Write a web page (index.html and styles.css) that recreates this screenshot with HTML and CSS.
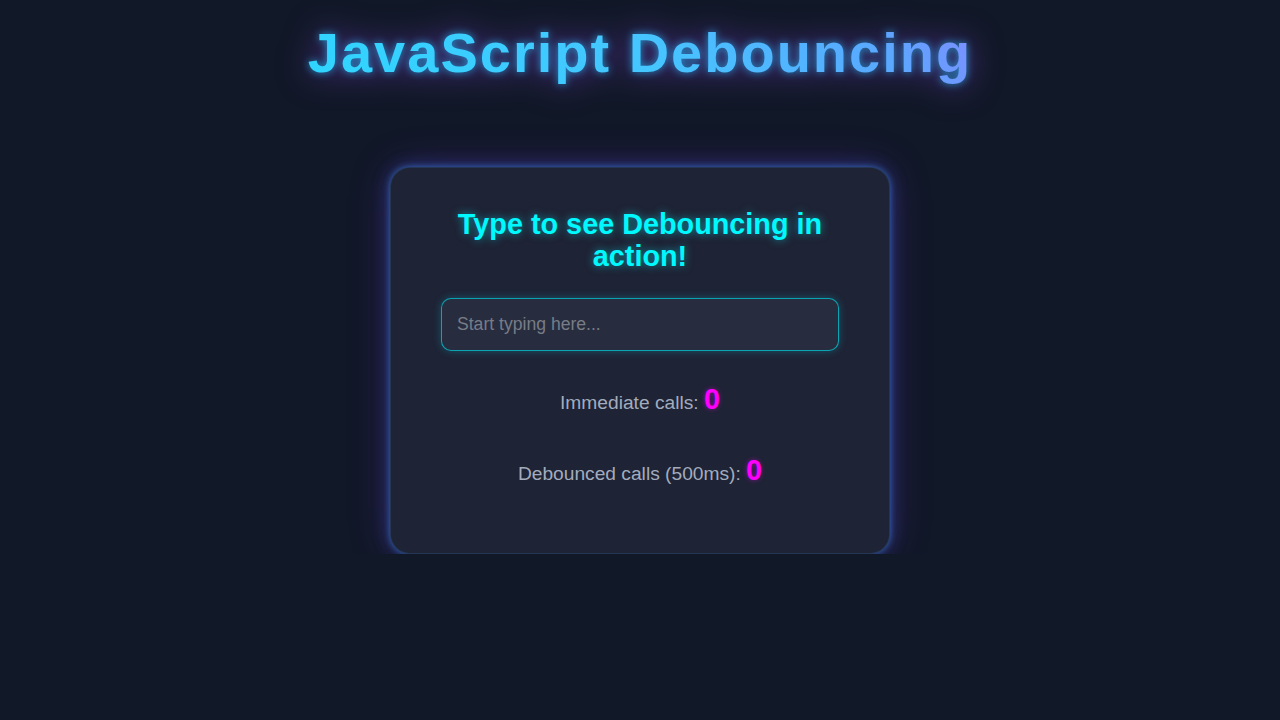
FILE: index.html
```html
<!DOCTYPE html>
<html lang="en">
<head>
<meta charset="UTF-8">
<title>JavaScript Debouncing</title>
<link rel="stylesheet" href="styles.css">
</head>
<body>
  <h1 class="title">JavaScript Debouncing</h1>
  <main class="card">
    <h2 class="card-title">Type to see Debouncing in action!</h2>
    <input class="search" type="text" placeholder="Start typing here...">
    <div class="stats">
      <p class="stat">Immediate calls: <span class="count">0</span></p>
      <p class="stat">Debounced calls (500ms): <span class="count">0</span></p>
    </div>
  </main>
</body>
</html>
```

FILE: styles.css
```css
* { box-sizing: border-box; }

html, body {
  margin: 0;
  padding: 0;
  background: #111827;
  min-height: 100%;
}

body {
  font-family: "Liberation Sans", Arial, sans-serif;
  padding-top: 20px;
  display: flex;
  flex-direction: column;
  align-items: center;
}

.title {
  margin: 0 0 82px;
  font-size: 56px;
  font-weight: 700;
  letter-spacing: 2px;
  line-height: normal;
  background: linear-gradient(60deg, #2fd6ff 0%, #45c6ff 50%, #5aa8ff 85%, #7f8cff 100%);
  -webkit-background-clip: text;
  background-clip: text;
  -webkit-text-fill-color: transparent;
  color: transparent;
  filter: drop-shadow(0 0 4px rgba(40, 190, 255, 0.75)) drop-shadow(0 0 16px rgba(140, 70, 240, 0.55));
}

.card {
  width: 500px;
  background: #1e2335;
  border: 1px solid rgba(60, 110, 180, 0.25);
  border-radius: 20px;
  padding: 40px 50px 66px;
  display: flex;
  flex-direction: column;
  align-items: center;
  box-shadow: 0 0 6px rgba(60, 150, 255, 0.55), 0 0 18px rgba(70, 110, 240, 0.35), 0 0 40px rgba(130, 50, 230, 0.28);
}

.card-title {
  margin: 0 0 26px;
  font-size: 28.8px;
  line-height: 32px;
  font-weight: 700;
  color: #00f8ff;
  text-align: center;
  text-shadow: 0 0 8px rgba(0, 240, 255, 0.55);
}

.search {
  width: 398px;
  height: 53px;
  padding: 0 15px;
  font-family: "Liberation Sans", Arial, sans-serif;
  font-size: 17.6px;
  color: #e5e7eb;
  background: #272d3f;
  border: 1px solid rgba(0, 215, 230, 0.7);
  border-radius: 10px;
  box-shadow: 0 0 8px rgba(0, 230, 255, 0.25);
  outline: none;
}

.search::placeholder {
  color: #777c87;
}

.stats {
  margin-top: 32px;
  display: flex;
  flex-direction: column;
  gap: 37.6px;
  width: 100%;
}

.stat {
  margin: 0;
  text-align: center;
  font-size: 19.2px;
  color: #a3acbd;
}

.count {
  font-size: 28.8px;
  font-weight: 700;
  color: #ff00ff;
  text-shadow: 0 0 5px rgba(255, 0, 255, 0.45);
}
```
